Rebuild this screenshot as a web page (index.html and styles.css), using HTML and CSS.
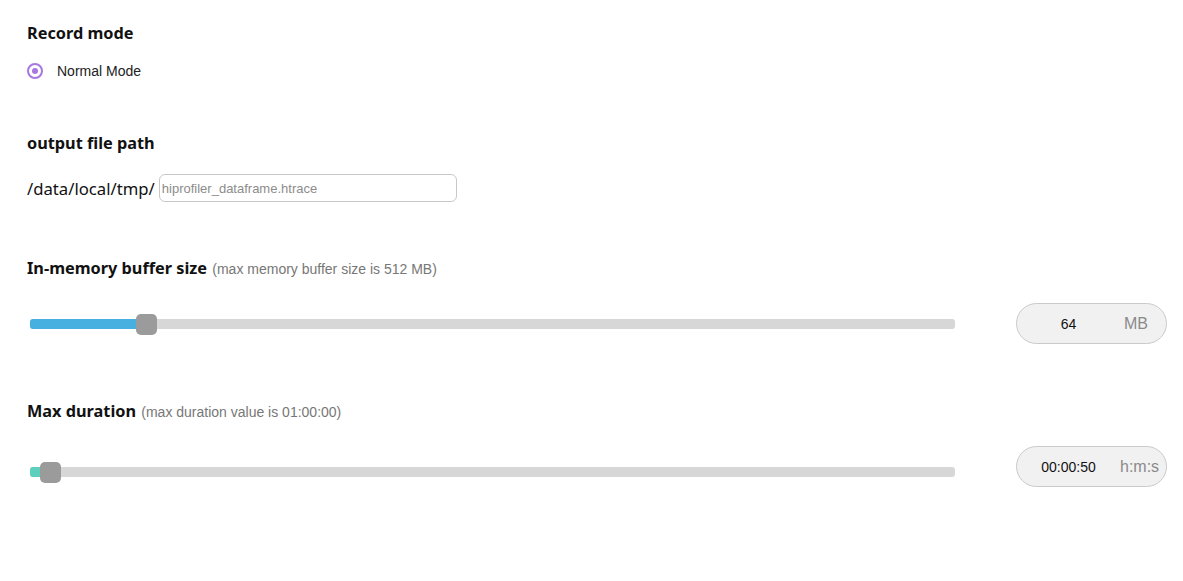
FILE: index.html
```html
<!DOCTYPE html>
<html lang="en">
<head>
<meta charset="utf-8">
<title>Record settings</title>
<link rel="stylesheet" href="styles.css">
</head>
<body>
<main class="page">
  <section class="section">
    <h2 class="title">Record mode</h2>
    <label class="radio-row">
      <span class="radio"><span class="radio-dot"></span></span>
      <span class="radio-label">Normal Mode</span>
    </label>
  </section>

  <section class="section section-path">
    <h2 class="title">output file path</h2>
    <div class="path-row">
      <span class="path-prefix">/data/local/tmp/</span>
      <input class="path-input" type="text" placeholder="hiprofiler_dataframe.htrace">
    </div>
  </section>

  <section class="section section-buffer">
    <h2 class="title">In-memory buffer size <span class="note">(max memory buffer size is 512 MB)</span></h2>
    <div class="slider-row">
      <div class="slider">
        <div class="track">
          <div class="fill fill-blue" style="width: 117px"></div>
          <div class="thumb" style="left: 106px"></div>
        </div>
      </div>
      <div class="value-box">
        <span class="value">64</span>
        <span class="unit">MB</span>
      </div>
    </div>
  </section>

  <section class="section section-duration">
    <h2 class="title">Max duration <span class="note">(max duration value is 01:00:00)</span></h2>
    <div class="slider-row">
      <div class="slider slider-low">
        <div class="track">
          <div class="fill fill-teal" style="width: 12px"></div>
          <div class="thumb" style="left: 10px"></div>
        </div>
      </div>
      <div class="value-box">
        <span class="value">00:00:50</span>
        <span class="unit">h:m:s</span>
      </div>
    </div>
  </section>
</main>
</body>
</html>
```

FILE: styles.css
```css
* { box-sizing: border-box; }

html, body {
  margin: 0;
  padding: 0;
  background: #ffffff;
}

body {
  font-family: "Liberation Sans", Arial, sans-serif;
  color: #212121;
}

.page {
  padding: 23px 0 0 27px;
  width: 1183px;
}

.title {
  margin: 0;
  font-family: "Noto Sans", "Open Sans", sans-serif;
  font-weight: 700;
  font-size: 16.3px;
  line-height: 20px;
  height: 20px;
  color: #111;
  white-space: nowrap;
}

.note {
  font-family: "Liberation Sans", Arial, sans-serif;
  font-weight: 400;
  font-size: 14px;
  line-height: 1;
  color: #777;
  margin-left: 1px;
}

.radio-row {
  display: flex;
  align-items: center;
  height: 20px;
  margin-top: 18px;
}

.radio {
  width: 16px;
  height: 16px;
  border: 2px solid #a877e0;
  border-radius: 50%;
  display: flex;
  align-items: center;
  justify-content: center;
  margin-right: 14px;
}

.radio-dot {
  width: 6px;
  height: 6px;
  border-radius: 50%;
  background: #a877e0;
}

.radio-label {
  font-size: 14px;
  color: #222;
}

.section-path { margin-top: 52px; }

.path-row {
  display: flex;
  align-items: center;
  margin-top: 21px;
  height: 28px;
}

.path-prefix {
  font-family: "Noto Sans", "Open Sans", sans-serif;
  font-size: 16.7px;
  color: #111;
  margin-right: 4px;
}

.path-input {
  width: 298px;
  height: 28px;
  border: 1px solid #c8c8c8;
  border-radius: 6px;
  padding: 0 2px;
  font-family: "Liberation Sans", Arial, sans-serif;
  font-size: 13px;
  outline: none;
  background: #fff;
}

.path-input::placeholder { color: #8c8c8c; }

.section-buffer { margin-top: 56px; }
.section-duration { margin-top: 57px; }

.slider-row {
  display: flex;
  align-items: center;
  margin-top: 25px;
  height: 41px;
}

.slider {
  width: 925px;
  margin-left: 3px;
  margin-right: 61px;
}

.slider-low { margin-top: 11px; }

.track {
  position: relative;
  height: 10px;
  border-radius: 3px;
  background: #d7d7d7;
}

.fill {
  height: 10px;
  border-radius: 3px 0 0 3px;
}

.fill-blue { background: #48b0e1; }
.fill-teal { background: #5dcfbd; }

.thumb {
  position: absolute;
  top: -5px;
  width: 21px;
  height: 21px;
  border-radius: 5px;
  background: #9b9b9b;
}

.value-box {
  display: flex;
  align-items: center;
  width: 151px;
  height: 41px;
  border: 1px solid #cacaca;
  border-radius: 21px;
  background: #f1f1f1;
  padding-right: 14px;
}

.value {
  width: 103px;
  text-align: center;
  font-size: 14px;
  color: #111;
}

.unit {
  width: 32px;
  text-align: center;
  font-size: 16px;
  color: #8a8a8a;
  white-space: nowrap;
}
```
